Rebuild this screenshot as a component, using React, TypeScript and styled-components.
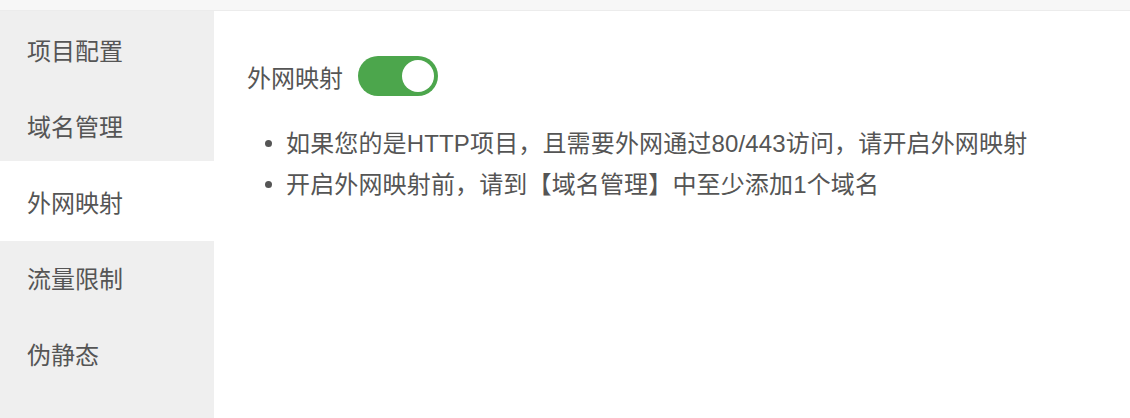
import React, { useState } from "react";
import styled, { createGlobalStyle } from "styled-components";

const GlobalStyle = createGlobalStyle`
  html, body { margin: 0; padding: 0; background: #ffffff; }
  body {
    font-family: "Liberation Sans", "Noto Sans CJK SC", sans-serif;
    color: #555555;
  }
  * { box-sizing: border-box; }
`;

const Page = styled.div`
  width: 1130px;
  height: 418px;
  display: flex;
  flex-direction: column;
  overflow: hidden;
`;

const TopStrip = styled.div`
  height: 11px;
  flex: none;
  background: #f7f7f7;
  border-bottom: 1px solid #ececec;
`;

const Body = styled.div`
  flex: 1;
  display: flex;
  min-height: 0;
`;

const Sidebar = styled.nav`
  width: 214px;
  flex: none;
  background: #efefef;
  display: flex;
  flex-direction: column;
`;

const NavItem = styled.div<{ $active?: boolean }>`
  height: 76px;
  display: flex;
  align-items: center;
  padding-left: 27px;
  font-size: 24px;
  color: #555555;
  cursor: pointer;
  background: ${(p) => (p.$active ? "#ffffff" : "transparent")};
  box-shadow: ${(p) => (p.$active ? "0 -2px 0 #ffffff, 0 2px 0 #ffffff" : "none")};
`;

const Main = styled.main`
  flex: 1;
  background: #ffffff;
  padding: 45px 0 0 33px;
`;

const TitleRow = styled.div`
  display: flex;
  align-items: center;
  gap: 15px;
  height: 40px;
`;

const Title = styled.span`
  font-size: 24px;
  color: #555555;
`;

const Switch = styled.button<{ $on: boolean }>`
  width: 80px;
  height: 40px;
  border-radius: 20px;
  border: none;
  padding: 4px;
  background: ${(p) => (p.$on ? "#4ca64c" : "#cccccc")};
  display: flex;
  justify-content: ${(p) => (p.$on ? "flex-end" : "flex-start")};
  cursor: pointer;
`;

const Knob = styled.span`
  width: 32px;
  height: 32px;
  border-radius: 50%;
  background: #ffffff;
`;

const Tips = styled.ul`
  margin: 27px 0 0 0;
  padding-left: 18px;
  list-style: none;
`;

const Tip = styled.li`
  display: flex;
  align-items: center;
  gap: 14px;
  font-size: 24px;
  line-height: 41px;
  color: #555555;
  letter-spacing: 0.15px;

  &::before {
    content: "";
    flex: none;
    width: 7px;
    height: 7px;
    border-radius: 50%;
    background: #555555;
  }
`;

const items = ["项目配置", "域名管理", "外网映射", "流量限制", "伪静态"];

export default function App() {
  const [on, setOn] = useState(true);
  return (
    <>
      <GlobalStyle />
      <Page>
        <TopStrip />
        <Body>
          <Sidebar>
            {items.map((t) => (
              <NavItem key={t} $active={t === "外网映射"}>
                {t}
              </NavItem>
            ))}
          </Sidebar>
          <Main>
            <TitleRow>
              <Title>外网映射</Title>
              <Switch $on={on} onClick={() => setOn(!on)} aria-label="toggle">
                <Knob />
              </Switch>
            </TitleRow>
            <Tips>
              <Tip>如果您的是HTTP项目，且需要外网通过80/443访问，请开启外网映射</Tip>
              <Tip>开启外网映射前，请到【域名管理】中至少添加1个域名</Tip>
            </Tips>
          </Main>
        </Body>
      </Page>
    </>
  );
}
